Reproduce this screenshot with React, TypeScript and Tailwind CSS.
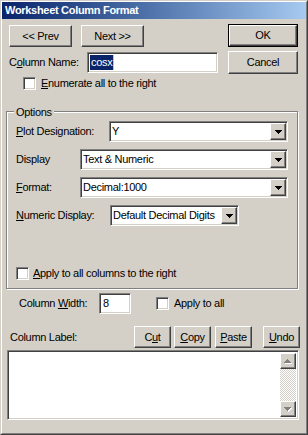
import type { ReactNode } from 'react'

const raised =
  'bg-[#d4d0c8] border border-t-white border-l-white border-r-[#404040] border-b-[#404040] shadow-[inset_-1px_-1px_#808080,inset_1px_1px_#d4d0c8]'
const sunken =
  'bg-white border border-t-[#808080] border-l-[#808080] border-r-white border-b-white shadow-[inset_1px_1px_#404040,inset_-1px_-1px_#d4d0c8]'

function Btn({ children, className }: { children: ReactNode; className: string }) {
  return (
    <div className={`${raised} flex items-center justify-center shrink-0 ${className}`}>
      {children}
    </div>
  )
}

function CheckBox() {
  return <span className={`${sunken} block w-[13px] h-[13px] shrink-0`} />
}

function DownArrow() {
  return (
    <svg width="7" height="4" viewBox="0 0 7 4" shapeRendering="crispEdges">
      <rect x="0" y="0" width="7" height="1" fill="#000" />
      <rect x="1" y="1" width="5" height="1" fill="#000" />
      <rect x="2" y="2" width="3" height="1" fill="#000" />
      <rect x="3" y="3" width="1" height="1" fill="#000" />
    </svg>
  )
}

// greyed-out scroll arrow with white emboss
function ScrollArrow({ up }: { up?: boolean }) {
  const rows = up ? [3, 2, 1, 0] : [0, 1, 2, 3]
  return (
    <svg width="8" height="5" viewBox="0 0 8 5" shapeRendering="crispEdges">
      {rows.map((inset, i) => (
        <rect key={'w' + i} x={inset + 1} y={i + 1} width={7 - inset * 2} height="1" fill="#fff" />
      ))}
      {rows.map((inset, i) => (
        <rect key={'g' + i} x={inset} y={i} width={7 - inset * 2} height="1" fill="#808080" />
      ))}
    </svg>
  )
}

function Combo({ value, className }: { value: string; className: string }) {
  return (
    <div className={`${sunken} h-[21px] flex items-center shrink-0 ${className}`}>
      <span className="flex-1 pl-[2px] whitespace-nowrap overflow-hidden">{value}</span>
      <div className={`${raised} w-[16px] h-[17px] mr-px flex items-center justify-center`}>
        <DownArrow />
      </div>
    </div>
  )
}

export default function App() {
  return (
    <div
      className="w-[308px] h-[435px] bg-[#d4d0c8] text-black text-[11px] tracking-[-0.3px] leading-none border border-t-[#d4d0c8] border-l-[#d4d0c8] border-r-[#404040] border-b-[#404040]"
      style={{ fontFamily: '"Liberation Sans", Arial, sans-serif' }}
    >
      <div className="h-full flex flex-col border border-t-white border-l-white border-r-[#808080] border-b-[#808080]">
        {/* title bar */}
        <div className="h-[17px] shrink-0 flex items-center pl-[3px] bg-linear-to-r from-[#0a246a] to-[#a6caf0] text-white font-bold tracking-[-0.3px]">
          Worksheet Column Format
        </div>

        {/* top section */}
        <div className="flex pt-[5px]">
          <div className="ml-[7px] flex flex-col">
            <div className="flex gap-[9px] mt-px">
              <Btn className="w-[63px] h-[22px]">&lt;&lt; Prev</Btn>
              <Btn className="w-[63px] h-[22px]">Next &gt;&gt;</Btn>
            </div>
            <div className="flex items-center mt-[5px] h-[21px]">
              <span className="w-[78px]">
                C<u>o</u>lumn Name:
              </span>
              <div className={`${sunken} w-[131px] h-[21px] flex items-center pl-[2px]`}>
                <span className="bg-[#0a246a] text-white px-px h-[15px] flex items-center">cosx</span>
                <span className="w-px h-[15px] bg-[#f0c060]" />
              </div>
            </div>
            <div className="flex items-center gap-[5px] mt-[4px] ml-[14px] h-[13px]">
              <CheckBox />
              <span>
                <u>E</u>numerate all to the right
              </span>
            </div>
          </div>
          <div className="ml-auto mr-[8px] flex flex-col gap-[4px]">
            <div className="w-[70px] h-[23px] border border-black flex">
              <Btn className="flex-1">OK</Btn>
            </div>
            <Btn className="w-[70px] h-[23px]">Cancel</Btn>
          </div>
        </div>

        {/* options group */}
        <div className="relative mt-[21px] ml-[4px] w-[292px] h-[178px] shrink-0 border border-[#808080] shadow-[inset_1px_1px_white,1px_1px_white] pt-[9px] px-[9px]">
          <span className="absolute -top-[5px] left-[7px] bg-[#d4d0c8] px-[2px]">Options</span>
          <div className="flex items-center h-[21px]">
            <span className="w-[93px]">
              <u>P</u>lot Designation:
            </span>
            <Combo value="Y" className="w-[179px]" />
          </div>
          <div className="flex items-center h-[21px] mt-[7px]">
            <span className="w-[64px]">Display</span>
            <Combo value="Text & Numeric" className="w-[208px]" />
          </div>
          <div className="flex items-center h-[21px] mt-[7px]">
            <span className="w-[64px]">
              <u>F</u>ormat:
            </span>
            <Combo value="Decimal:1000" className="w-[208px]" />
          </div>
          <div className="flex items-center h-[21px] mt-[7px]">
            <span className="w-[94px]">
              <u>N</u>umeric Display:
            </span>
            <Combo value="Default Decimal Digits" className="w-[129px]" />
          </div>
          <div className="flex items-center gap-[4px] mt-[41px] h-[13px]">
            <CheckBox />
            <span>
              <u>A</u>pply to all columns to the right
            </span>
          </div>
        </div>

        {/* column width */}
        <div className="flex items-center mt-[4px] ml-[17px] h-[21px]">
          <span className="w-[80px]">
            Column <u>W</u>idth:
          </span>
          <div className={`${sunken} w-[32px] h-[21px] flex items-center pl-[3px]`}>8</div>
          <div className="flex items-center gap-[5px] ml-[25px]">
            <CheckBox />
            <span>Apply to all</span>
          </div>
        </div>

        {/* column label */}
        <div className="flex items-center mt-[12px] ml-[8px] h-[22px]">
          <span className="w-[124px]">Column Label:</span>
          <Btn className="w-[37px] h-[22px]">
            C<u>u</u>t
          </Btn>
          <Btn className="w-[37px] h-[22px] ml-[3px]">
            <u>C</u>opy
          </Btn>
          <Btn className="w-[37px] h-[22px] ml-[4px]">
            <u>P</u>aste
          </Btn>
          <Btn className="w-[37px] h-[22px] ml-[11px]">
            <u>U</u>ndo
          </Btn>
        </div>

        <div className={`${sunken} mt-[2px] ml-[5px] w-[292px] h-[70px] flex p-[2px]`}>
          <div className="flex-1" />
          <div className="w-[16px] flex flex-col">
            <div className={`${raised} h-[16px] flex items-center justify-center`}>
              <ScrollArrow up />
            </div>
            <div className="flex-1 bg-[image:repeating-conic-gradient(#d4d0c8_0_25%,#ffffff_0_50%)] bg-[length:2px_2px]" />
            <div className={`${raised} h-[16px] flex items-center justify-center`}>
              <ScrollArrow />
            </div>
          </div>
        </div>
      </div>
    </div>
  )
}
